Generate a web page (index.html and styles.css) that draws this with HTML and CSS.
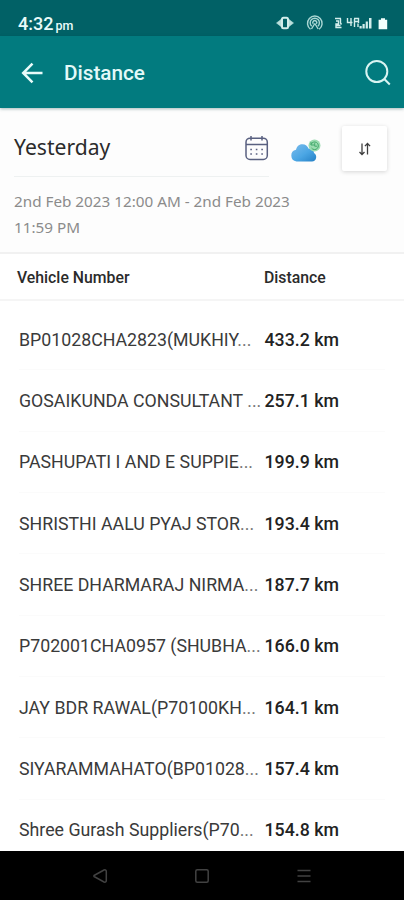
FILE: index.html
```html
<!DOCTYPE html>
<html lang="en">
<head>
<meta charset="utf-8">
<title>Distance</title>
<link rel="stylesheet" href="styles.css">
</head>
<body>
<div class="screen">
  <div class="status">
    <div class="time">4:32<span class="ampm">pm</span></div>
    <svg class="status-icons" width="114" height="18" viewBox="0 0 114 18" fill="none" stroke="#d3eeec">
      <path d="M6 5.500 1.500 9 6 12.500zM14 5.500 18.500 9 14 12.500z" fill="#b9dfdc" stroke="#b9dfdc" stroke-width=".6"/>
      <rect x="7" y="3.800" width="6" height="10.400" rx="1.500" stroke-width="2"/>
      <g stroke-width="1.400" stroke="#a9d6d3">
        <path d="M35.500 15.200a7.300 7.300 0 1 1 8.600 0"/>
        <path d="M36.700 12.200a4.600 4.600 0 1 1 6.200 0"/>
        <path d="M38.200 9.800a2 2 0 1 1 3.200 0M39.800 9.500 36.500 15M39.800 9.500 43.200 15"/>
      </g>
      <g stroke-width="1.400">
        <path d="M60 4.500h6M61 7h2.500v3H61v3.500h5.500M65.500 4.500v4.500l1 1.500M60.500 11.500h5"/>
        <path d="M72.500 4v4.500h5M76 4v8M79 4.500h4.500V9M79.500 7.500h3.500M79.500 5v8M83 9.500v3.500"/>
      </g>
      <path d="M84.500 12h2.200v2.500h-2.200zM87.500 10h2.200v4.500h-2.200zM90.700 7.500h2.200v7h-2.200zM94 4h2.500v10.500H94z" fill="#d3eeec" stroke="none"/>
      <path d="M106 4.200h4v1.500h2.200v9.500h-8.600V5.700h2.400z" fill="#f2fffd" stroke="none"/>
    </svg>
  </div>
  <header class="appbar">
    <svg width="24" height="24" viewBox="0 0 24 24" fill="none" stroke="#e9fbfa" stroke-width="2.500"><path d="M22.500 12H4M12.500 2.700 3.200 12l9.300 9.300"/></svg>
    <h1>Distance</h1>
    <svg class="search" width="28" height="28" viewBox="0 0 28 28" fill="none" stroke="#daf4f2" stroke-width="2"><circle cx="12.800" cy="12.500" r="10.500"/><path d="m20.300 20 5.500 5.500"/></svg>
  </header>
  <section class="filter">
    <div class="tools">
      <div class="field">
        <span>Yesterday</span>
        <svg width="26" height="26" viewBox="0 0 26 26" fill="none" stroke="#596080" stroke-width="1.500">
          <rect x="3" y="3.200" width="21.300" height="21.300" rx="4"/>
          <path d="M3 9.500h21.300M8 1v4.500M19 1v4.500"/>
          <path d="M7.300 14.500h13.500M7.300 19h13.500" stroke-width="1.600" stroke-dasharray="1.600 3.900"/>
        </svg>
      </div>
      <svg class="cloud" width="32" height="26" viewBox="0 0 32 26">
        <defs><linearGradient id="sky" x1="0" y1="0" x2="1" y2="1"><stop offset="0" stop-color="#7cbcec"/><stop offset=".55" stop-color="#4ba6e4"/><stop offset="1" stop-color="#247fc5"/></linearGradient></defs>
        <path d="M6.500 23.500a6 6 0 0 1-.5-11.800C7 7.500 10 6 12.500 6.200c3 .1 5 1.800 6.200 4.600 3.300-.6 5.300 1.500 5.300 4.200 3.800 2.300 2.500 8.500-2 8.500z" fill="url(#sky)"/>
        <circle cx="24.500" cy="7.500" r="6" fill="#9bdcb0"/>
        <path d="M21 6.500a3.800 3.800 0 1 1 .5 3.500M21 4v3h3M24.700 5.200v3h2.500" fill="none" stroke="#43a96c" stroke-width="1"/>
      </svg>
      <div class="sort">
        <svg width="14" height="16" viewBox="0 0 14 16" fill="none" stroke="#3e3e3e" stroke-width="1.300"><path d="M4 2.500v11M1.500 11 4 13.500 6.500 11M9.500 13.500V2.500M6.900 5.100 9.500 2.500l2.600 2.600"/></svg>
      </div>
    </div>
    <p class="range">2nd Feb 2023 12:00 AM - 2nd Feb 2023<br>11:59 PM</p>
  </section>
  <div class="head"><span>Vehicle Number</span><span>Distance</span></div>
  <main class="list">
    <div class="row"><span class="name">BP01028CHA2823(MUKHIY<i>...</i></span><b>433.2 km</b></div>
    <div class="row"><span class="name">GOSAIKUNDA CONSULTANT <i>...</i></span><b>257.1 km</b></div>
    <div class="row"><span class="name">PASHUPATI I AND E SUPPIE<i>...</i></span><b>199.9 km</b></div>
    <div class="row"><span class="name">SHRISTHI AALU PYAJ STOR<i>...</i></span><b>193.4 km</b></div>
    <div class="row"><span class="name">SHREE DHARMARAJ NIRMA<i>...</i></span><b>187.7 km</b></div>
    <div class="row"><span class="name">P702001CHA0957 (SHUBHA<i>...</i></span><b>166.0 km</b></div>
    <div class="row"><span class="name">JAY BDR RAWAL(P70100KH<i>...</i></span><b>164.1 km</b></div>
    <div class="row"><span class="name">SIYARAMMAHATO(BP01028<i>...</i></span><b>157.4 km</b></div>
    <div class="row"><span class="name">Shree Gurash Suppliers(P70<i>...</i></span><b>154.8 km</b></div>
  </main>
  <nav class="nav">
    <svg width="16" height="16" viewBox="0 0 16 16"><path d="M12 2 2 7.500v1L12 14q2.300.6 2.300-1.500v-9Q14.300 1.400 12 2z"/></svg>
    <svg width="16" height="16" viewBox="0 0 16 16"><rect x="1.800" y="1.800" width="12.400" height="12.400" rx="1.500"/></svg>
    <svg width="16" height="16" viewBox="0 0 16 16"><path d="M1.500 2.500h13M1.500 8h13M1.500 13.500h13"/></svg>
  </nav>
</div>
</body>
</html>
```
FILE: styles.css
```css
* { box-sizing: border-box; }
body { margin: 0; background: #fff; font-family: Roboto, "Liberation Sans", sans-serif; }
.screen { width: 404px; height: 900px; display: flex; flex-direction: column; overflow: hidden; }
.status { flex: none; height: 36px; padding: 10px 15px 0 18px; display: flex; justify-content: space-between; background: #016166; color: #e9fbfa; }
.time { font-size: 18px; line-height: 28px; font-weight: 500; }
.ampm { font-size: 12.500px; margin-left: 2px; }
.status-icons { margin-top: 4px; }
.appbar { flex: none; height: 72px; padding: 1px 12px 0 20px; display: flex; align-items: center; background: #027b7f; color: #e4f9f8; z-index: 1; box-shadow: 0 1px 3px rgba(0,60,60,.35); }
.appbar h1 { margin: 1px 0 0 20px; font-size: 20.700px; font-weight: 500; line-height: 24px; }
.search { margin-left: auto; }
.filter { flex: none; height: 146px; padding: 18px 17px 0 14px; background: #fdfdfd; border-bottom: 2px solid #f1f1f1; }
.tools { display: flex; align-items: flex-start; }
.field { width: 255px; height: 51px; padding-bottom: 6px; display: flex; align-items: center; justify-content: space-between; border-bottom: 1px solid #eef1f1; font: 21.100px "Noto Sans", sans-serif; color: #2b2b2b; }
.field span { margin-top: -3px; }
.cloud { margin: 12px 0 0 21px; }
.sort { width: 45px; height: 45px; margin-left: auto; display: flex; align-items: center; justify-content: center; background: #fff; box-shadow: 0 1px 4px rgba(0,0,0,.16); border-radius: 2px; }
.range { margin: 11px 0 0; font: 15.260px/26px "Noto Sans", sans-serif; color: #8b8b8b; white-space: nowrap; }
.head { flex: none; height: 47px; padding: 2px 17px 0; display: grid; grid-template-columns: 247px 1fr; align-items: center; border-bottom: 2px solid #f5f5f5; font-size: 15.800px; font-weight: 500; color: #2b2b2b; }
.list { flex: 1; min-height: 0; overflow: hidden; padding: 8px 19px 0; }
.row { height: 61.330px; padding-top: 1px; display: grid; grid-template-columns: 245.500px 1fr; align-items: center; border-bottom: 1px solid #fbfbfb; font-size: 17.750px; color: #3a3a3a; white-space: nowrap; }
.row i { font-style: normal; color: #777; }
.row b { font-weight: 500; color: #222; }
.nav { flex: none; height: 49px; padding-left: 92px; display: flex; align-items: center; gap: 86px; background: #000; }
.nav svg { fill: none; stroke: #424242; stroke-width: 1.500; }
```
